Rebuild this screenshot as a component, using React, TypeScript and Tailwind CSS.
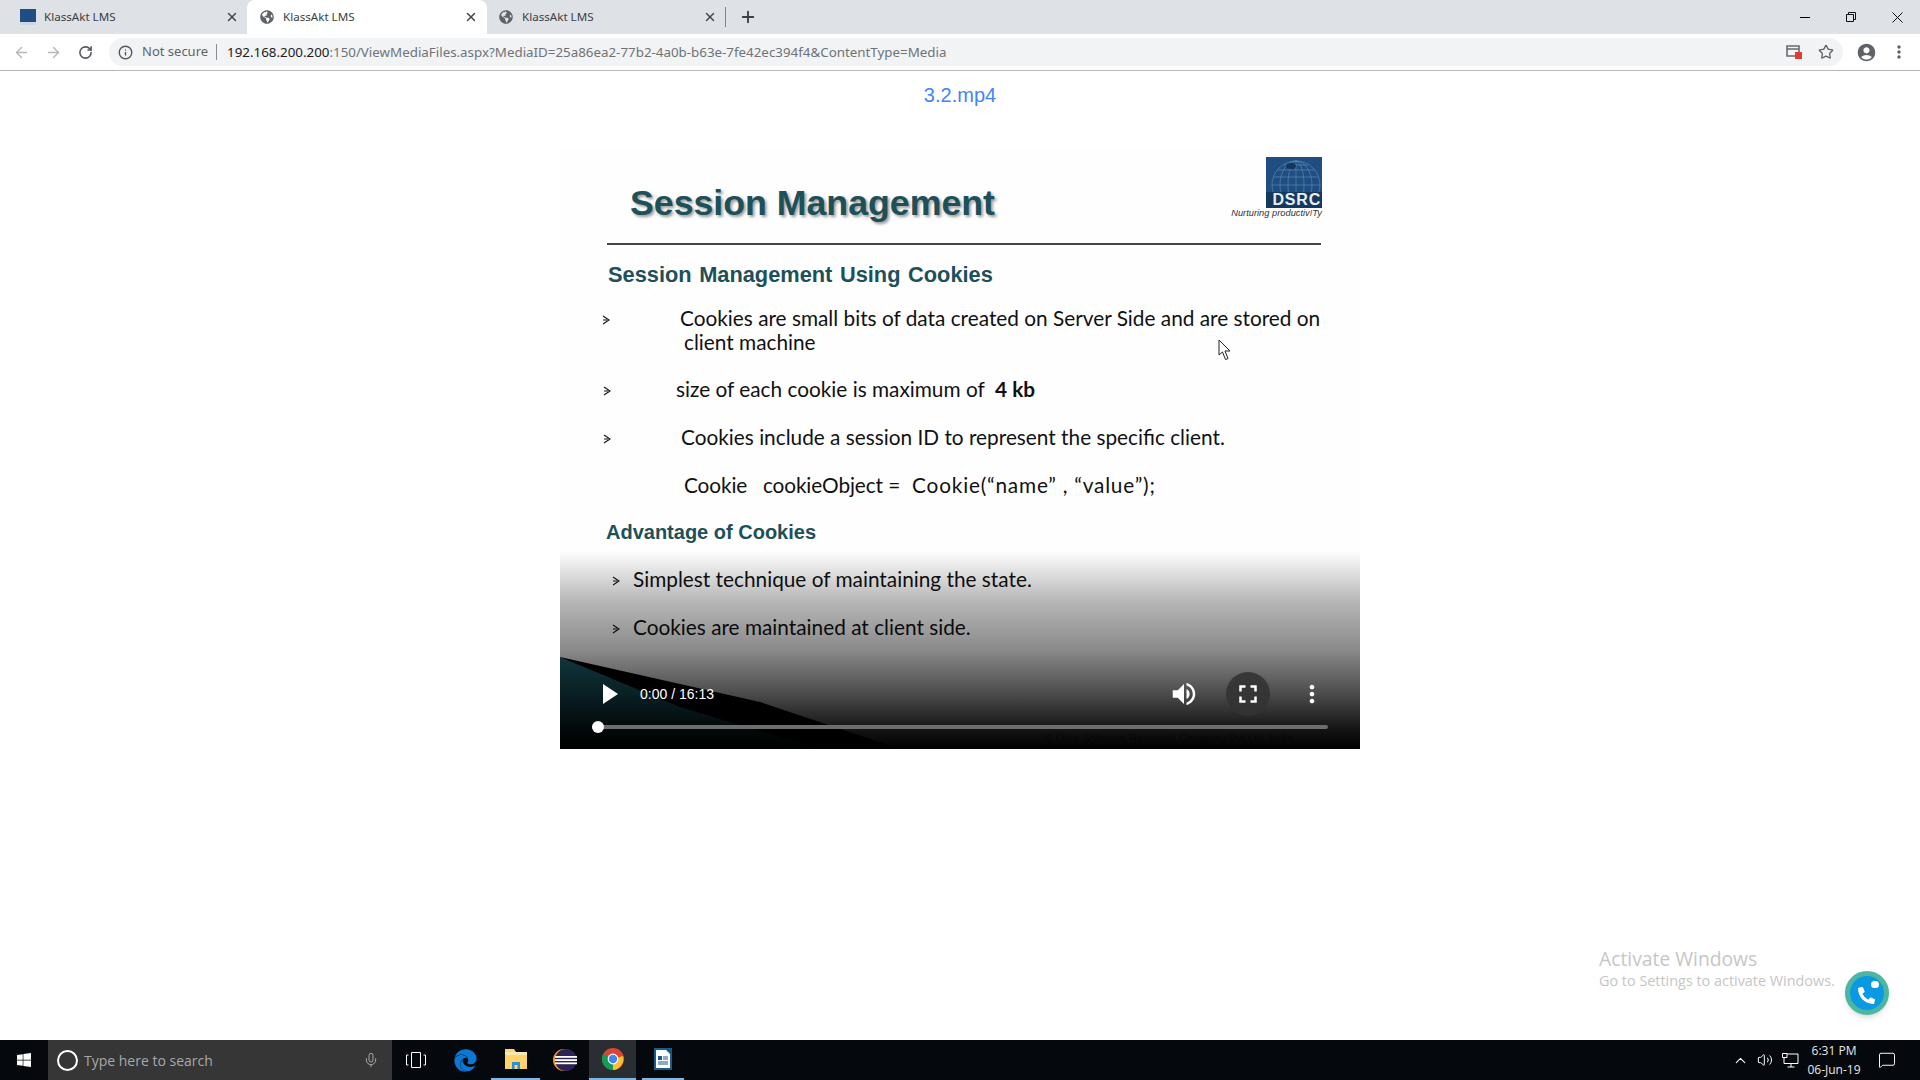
import React from 'react';
import { ArrowLeft, ArrowRight, ChevronUp, Info, MessageSquare, Mic, Plus, RotateCw, Star, Volume2, X } from 'lucide-react';
import { FaEdge, FaGlobeAmericas, FaPhoneAlt, FaWindows } from 'react-icons/fa';
import { MdAccountCircle, MdFullscreen, MdMoreVert, MdVolumeUp } from 'react-icons/md';

const DsrcFavicon: React.FC = () => (
  <div className="w-4 h-4 bg-[#1f4e82] flex items-end justify-center">
    <div className="w-full h-[3px] bg-[#cfd8e2]"></div>
  </div>
);

interface TabProps {
  active?: boolean;
  icon: React.ReactNode;
  className: string;
}

const Tab: React.FC<TabProps> = ({ active, icon, className }) => (
  <div className={`relative flex items-center h-[34px] ${className} ${active ? 'bg-white rounded-t-lg' : ''}`}>
    <div className="w-4 h-4 flex items-center justify-center text-[#5f6368] shrink-0">{icon}</div>
    <span className="ml-[8px] text-[11.6px] text-[#3c4043] w-[170px] font-['Noto_Sans',sans-serif]">KlassAkt LMS</span>
    <X className="w-[14px] h-[14px] text-[#45484c] ml-[11px]" strokeWidth={2.5} />
  </div>
);

const Bullet: React.FC = () => (
  <svg className="w-[8px] h-[10px] shrink-0 mt-[9px]" viewBox="0 0 8 10" fill="none" stroke="#111" strokeWidth="1.1">
    <path d="M1 1 L7 5 L1 9 M1 5 L5 5" />
  </svg>
);

const ChromeLogo: React.FC = () => (
  <svg className="w-6 h-6" viewBox="0 0 24 24">
    <circle cx="12" cy="12" r="11" fill="#db4437" />
    <path d="M12 12 L22 9 A11 11 0 0 1 12 23 Z" fill="#fbc02d" />
    <path d="M12 12 L12 23 A11 11 0 0 1 2.2 6.8 Z" fill="#0f9d58" />
    <circle cx="12" cy="12" r="5.4" fill="#fff" />
    <circle cx="12" cy="12" r="4.2" fill="#4285f4" />
  </svg>
);

const EclipseLogo: React.FC = () => (
  <svg className="w-6 h-6" viewBox="0 0 24 24">
    <circle cx="11" cy="12" r="11" fill="#f7941e" />
    <circle cx="13" cy="12" r="11" fill="#2c2255" />
    <rect x="2" y="8" width="22" height="1.8" fill="#fff" />
    <rect x="2" y="11.2" width="22" height="1.8" fill="#fff" />
    <rect x="2" y="14.4" width="22" height="1.8" fill="#fff" />
  </svg>
);

const ExplorerLogo: React.FC = () => (
  <svg className="w-6 h-6" viewBox="0 0 24 24">
    <path d="M1 2 H10 L12 5 H23 V22 H1 Z" fill="#ffd46b" />
    <rect x="1" y="5" width="22" height="3" fill="#f9e8ad" />
    <path d="M8 22 V15 H16 V22 H13.5 V18 H10.5 V22 Z" fill="#2a8fd8" />
  </svg>
);

const WriterLogo: React.FC = () => (
  <svg className="w-6 h-6" viewBox="0 0 24 24">
    <path d="M3 1 H16 L21 6 V23 H3 Z" fill="#1b5c84" />
    <path d="M5 3 H15 L19 7 V21 H5 Z" fill="#fff" />
    <path d="M7 9 H11 V13 H7 Z" fill="#1b5c84" />
    <path d="M12 10 H17 M12 12 H17 M7 15 H17 M7 17 H17" stroke="#1b5c84" strokeWidth="1.2" />
    <path d="M16 1 L21 1 L21 6 Z" fill="#1b5c84" />
  </svg>
);

const DsrcLogo: React.FC = () => (
  <div className="relative w-[56px] h-[51px] bg-[#1f4e82] overflow-hidden">
    <svg className="w-[56px] h-[51px]" viewBox="0 0 56 51" fill="none" stroke="#6f9abf" strokeWidth="0.5">
      <circle cx="30" cy="28" r="24" />
      <ellipse cx="30" cy="28" rx="16" ry="24" />
      <ellipse cx="30" cy="28" rx="8" ry="24" />
      <path d="M30 4 V52 M6 28 H54 M8 20 H52 M11 13 H49 M18 8 H42" />
      <ellipse cx="25" cy="9" rx="5" ry="3" fill="#16355a" stroke="none" />
    </svg>
    <div className="absolute left-0 right-0 bottom-0 h-[16px] bg-[#14395f]"></div>
    <span className="absolute right-[1px] bottom-[1px] text-[16px] leading-[15px] font-bold text-[#e8edf2] tracking-[0.8px] font-['Liberation_Sans',sans-serif]">DSRC</span>
  </div>
);

const App: React.FC = () => {
  const bodyText = "text-[20.8px] leading-[24px] text-[#111] font-['Lato',sans-serif]";
  const headText = "font-['Liberation_Sans',sans-serif] font-bold text-[#1d5059]";

  return (
    <div className="relative w-[1920px] h-[1080px] flex flex-col overflow-hidden bg-white">
      {/* browser tabs */}
      <div className="h-[34px] bg-[#dee1e6] flex items-center shrink-0">
        <Tab icon={<DsrcFavicon />} className="pl-[20px] w-[247px]" />
        <Tab active icon={<FaGlobeAmericas className="w-[14px] h-[14px]" />} className="pl-[12px] w-[240px]" />
        <Tab icon={<FaGlobeAmericas className="w-[14px] h-[14px]" />} className="pl-[11px] w-[238px]" />
        <div className="w-px h-[20px] bg-[#80868b]"></div>
        <Plus className="w-[18px] h-[18px] ml-[13px] text-[#3c4043]" strokeWidth={2.5} />
        <div className="ml-auto flex items-center text-[#111]">
          <div className="w-[46px] flex justify-center"><div className="w-[10px] h-px bg-black"></div></div>
          <div className="w-[46px] flex justify-center">
            <svg className="w-[10px] h-[10px]" viewBox="0 0 10 10" fill="none" stroke="#111"><path d="M0.5 2.5 H7.5 V9.5 H0.5 Z M2.5 2.5 V0.5 H9.5 V7.5 H7.5" /></svg>
          </div>
          <div className="w-[46px] flex justify-center">
            <svg className="w-[11px] h-[11px]" viewBox="0 0 11 11" stroke="#111"><path d="M0.5 0.5 L10.5 10.5 M10.5 0.5 L0.5 10.5" /></svg>
          </div>
        </div>
      </div>

      {/* address bar */}
      <div className="h-[37px] bg-white border-b border-[#b8b8b8] flex items-start shrink-0">
        <div className="w-[109px] h-[36px] flex items-center pl-[13px] text-[#5f6368]">
          <ArrowLeft className="w-[17px] h-[17px] text-[#b4b7bb]" />
          <ArrowRight className="w-[17px] h-[17px] ml-[15px] text-[#b4b7bb]" />
          <RotateCw className="w-[15px] h-[15px] ml-[16px] text-[#55585c]" strokeWidth={2.5} />
        </div>
        <div className="mt-[4px] w-[1734px] h-[28px] rounded-full bg-[#f1f3f4] flex items-center pl-[9px] text-[13px] font-['Noto_Sans',sans-serif]">
          <Info className="w-[15px] h-[15px] text-[#55585c]" strokeWidth={2.2} />
          <span className="ml-[9px] text-[#5f6368]">Not secure</span>
          <div className="w-px h-[16px] bg-[#8a8d91] ml-[8px]"></div>
          <span className="ml-[10px] text-[13.35px] text-[#202124]">192.168.200.200</span>
          <span className="text-[13.35px] text-[#6f7378]">:150/ViewMediaFiles.aspx?MediaID=25a86ea2-77b2-4a0b-b63e-7fe42ec394f4&amp;ContentType=Media</span>
          <div className="ml-auto flex items-center pr-[9px]">
            <div className="relative w-[16px] h-[14px]">
              <svg className="w-[14px] h-[12px]" viewBox="0 0 14 12" fill="none" stroke="#666b70" strokeWidth="1.6"><path d="M1 1 H13 V11 H1 Z M1 4 H13" /></svg>
              <div className="absolute right-0 bottom-0 w-[7px] h-[7px] bg-[#e53935]"></div>
            </div>
            <Star className="w-[16px] h-[16px] ml-[16px] text-[#5f6368]" strokeWidth={2} />
          </div>
        </div>
        <div className="h-[36px] flex items-center pl-[13px] text-[#5f6368]">
          <MdAccountCircle className="w-[21px] h-[21px]" />
          <MdMoreVert className="w-[20px] h-[20px] ml-[12px]" />
        </div>
      </div>

      {/* page content */}
      <div className="relative flex-1 flex flex-col items-center">
        <div className="mt-[12px] h-[24px] leading-[24px] text-[20px] text-[#4285f4] font-['Liberation_Sans',sans-serif]">3.2.mp4</div>

        <div className="relative mt-[42px] w-[800px] h-[600px] bg-[#fefefe] pt-[8px] overflow-hidden">
          <div className="h-[65px] flex justify-between pl-[70px] pr-[38px]">
            <h1 className={`mt-[24px] text-[35.7px] leading-[44px] ${headText} [text-shadow:2px_2px_3px_#999]`}>Session Management</h1>
            <div className="flex flex-col items-end">
              <DsrcLogo />
              <span className="mt-[-1px] text-[9.3px] leading-[12px] whitespace-nowrap italic text-[#333] font-['Liberation_Sans',sans-serif]">Nurturing productiv<span className="text-[#c0392b]">I</span>Ty</span>
            </div>
          </div>
          <div className="mt-[21px] ml-[47px] w-[714px] h-[1.5px] bg-[#444]"></div>

          <h2 className={`mt-[16px] ml-[48px] text-[21.8px] leading-[28px] [word-spacing:1.5px] ${headText}`}>Session Management Using Cookies</h2>

          <div className={`mt-[17px] pl-[42px] flex ${bodyText}`}>
            <Bullet />
            <div className="ml-[70px]">
              <div>Cookies are small bits of data created on Server Side and are stored on</div>
              <div className="ml-[4px]">client machine</div>
            </div>
          </div>
          <div className={`mt-[23px] pl-[43px] flex ${bodyText}`}>
            <Bullet />
            <div className="ml-[65px]">size of each cookie is maximum of &nbsp;<span className="font-bold">4 kb</span></div>
          </div>
          <div className={`mt-[24px] pl-[43px] flex ${bodyText}`}>
            <Bullet />
            <div className="ml-[70px]">Cookies include a session ID to represent the specific client.</div>
          </div>
          <div className={`mt-[24px] pl-[124px] flex whitespace-pre ${bodyText}`}>
            <span className="tracking-[-0.1px]">Cookie   cookieObject =</span>
            <span className="ml-[12px] tracking-[0.8px]">Cookie(“name” , “value”);</span>
          </div>

          <h2 className={`mt-[23px] ml-[46px] text-[20px] leading-[24px] ${headText}`}>Advantage of Cookies</h2>

          <div className={`mt-[23px] pl-[52px] flex ${bodyText}`}>
            <Bullet />
            <div className="ml-[13px]">Simplest technique of maintaining the state.</div>
          </div>
          <div className={`mt-[24px] pl-[52px] flex ${bodyText}`}>
            <Bullet />
            <div className="ml-[13px]">Cookies are maintained at client side.</div>
          </div>

          {/* slide corner decoration and footer */}
          <svg className="absolute left-0 bottom-0 w-[400px] h-[92px]" viewBox="0 0 400 92">
            <path d="M0 0 L340 92 L0 92 Z" fill="#1f6a78" />
            <path d="M0 0 L200 45 L340 92 L260 92 L120 50 Z" fill="#000" />
          </svg>
          <span className="absolute left-[485px] bottom-[3px] text-[11px] text-[#888] font-['Liberation_Sans',sans-serif]">© Data Software Research Company Pvt Ltd, India</span>

          {/* video controls */}
          <div className="absolute left-0 right-0 bottom-0 h-[198px] bg-[linear-gradient(to_bottom,rgba(0,0,0,0)_0%,rgba(0,0,0,0.28)_25%,rgba(0,0,0,0.46)_50%,rgba(0,0,0,0.7)_72%,rgba(0,0,0,0.92)_90%,rgba(0,0,0,1)_100%)]"></div>
          <div className="absolute left-0 right-0 bottom-0 h-[90px] flex flex-col">
            <div className="h-[44px] mt-[13px] flex items-center pl-[42px] pr-[40px] text-white">
              <svg className="w-[16px] h-[20px]" viewBox="0 0 16 20" fill="#fff"><path d="M1 0 L16 10 L1 20 Z" /></svg>
              <span className="ml-[22px] text-[14px] font-['Liberation_Sans',sans-serif]">0:00 / 16:13</span>
              <MdVolumeUp className="w-[30px] h-[30px] ml-auto" />
              <div className="w-[44px] h-[44px] rounded-full bg-[#333]/90 flex items-center justify-center ml-[27px]">
                <MdFullscreen className="w-[30px] h-[30px]" />
              </div>
              <MdMoreVert className="w-[28px] h-[28px] ml-[28px] mr-[-6px]" />
            </div>
            <div className="relative mt-[9px] ml-[32px] w-[736px] h-[4px] rounded-full bg-[#6d6d6d]">
              <div className="absolute left-0 top-[-4px] w-[12px] h-[12px] rounded-full bg-white"></div>
            </div>
          </div>
        </div>

        {/* windows watermark and call widget */}
        <div className="absolute left-[1599px] top-[875px] text-[#c6c6c6] font-['Open_Sans',sans-serif]">
          <div className="text-[19.3px] leading-[26px]">Activate Windows</div>
          <div className="text-[14.4px] leading-[20px] mt-[-1px]">Go to Settings to activate Windows.</div>
        </div>
        <div className="absolute left-[1845px] top-[900px] w-[44px] h-[44px] rounded-full bg-[#0a9ae4] border-[5px] border-[#4db6a0] flex items-center justify-center shadow-md">
          <FaPhoneAlt className="w-[17px] h-[17px] text-white mt-[5px] mr-[2px]" />
          <div className="absolute right-[5px] top-[5px] w-[8px] h-[7px] rounded-full bg-white"></div>
        </div>
      </div>

      {/* cursor */}
      <svg className="absolute left-[1218px] top-[339px] w-[13px] h-[22px]" viewBox="0 0 13 22" fill="#fff" stroke="#222">
        <path d="M1 1 L1 16 L4.5 13 L7.5 20.5 L10 19.5 L7 12 L12 12 Z" />
      </svg>

      {/* taskbar */}
      <div className="h-[40px] bg-[#05080c] flex items-center text-white shrink-0">
        <div className="w-[48px] flex justify-center"><FaWindows className="w-[16px] h-[16px]" /></div>
        <div className="w-[344px] h-[40px] bg-[#363636] flex items-center pl-[9px]">
          <div className="w-[21px] h-[21px] rounded-full border-[2.5px] border-white"></div>
          <span className="ml-[6px] text-[14px] text-[#a8a8a8] font-['Open_Sans',sans-serif]">Type here to search</span>
          <Mic className="w-[16px] h-[16px] ml-auto mr-[13px] text-[#a8a8a8]" strokeWidth={1.5} />
        </div>
        <div className="w-[48px] flex justify-center">
          <svg className="w-[20px] h-[16px]" viewBox="0 0 20 16" fill="none" stroke="#fff"><path d="M5.5 0.5 H14.5 V15.5 H5.5 Z M2.5 3 H0.5 V13 H2.5 M17.5 3 H19.5 V13 H17.5" /></svg>
        </div>
        <div className="w-[51px] h-[40px] flex items-center justify-center"><FaEdge className="w-[23px] h-[23px] text-[#0a78d4]" /></div>
        <div className="w-[49px] h-[40px] flex items-center justify-center border-b-2 border-[#76b9ed]"><ExplorerLogo /></div>
        <div className="w-[49px] h-[40px] flex items-center justify-center"><EclipseLogo /></div>
        <div className="w-[47px] h-[40px] flex items-center justify-center bg-[#2a2e33] border-b-2 border-[#76b9ed]"><ChromeLogo /></div>
        <div className="w-[6px]"></div>
        <div className="w-[42px] h-[40px] flex items-center justify-center border-b-2 border-[#76b9ed]"><WriterLogo /></div>

        <div className="ml-auto flex items-center">
          <ChevronUp className="w-[17px] h-[17px]" strokeWidth={1.5} />
          <Volume2 className="w-[16px] h-[16px] ml-[8px]" strokeWidth={1.5} />
          <svg className="w-[17px] h-[15px] ml-[9px]" viewBox="0 0 17 15" fill="none" stroke="#fff"><path d="M2 1 H16 V10.5 H2 Z M9 10.5 V14 M5.5 14 H12.5" /><path d="M0.5 0.5 H5 V4.5 H0.5 Z" fill="#05080c" /></svg>
          <div className="w-[62px] ml-[4px] text-center text-[12px] leading-[19px] text-[#e8e8e8] font-['Open_Sans',sans-serif]">
            <div>6:31 PM</div>
            <div>06-Jun-19</div>
          </div>
          <MessageSquare className="w-[18px] h-[18px] ml-[13px] mr-[24px]" strokeWidth={1.3} />
        </div>
      </div>
    </div>
  );
};

export default App;
